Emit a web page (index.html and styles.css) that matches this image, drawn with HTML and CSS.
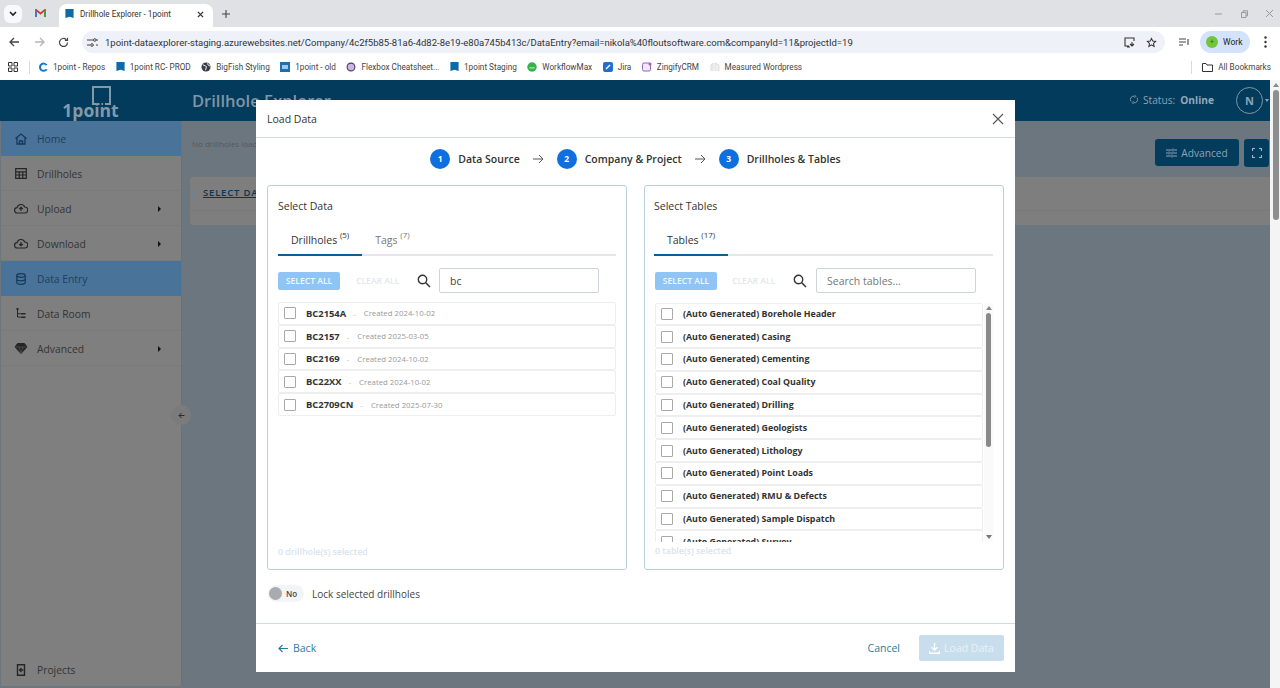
FILE: index.html
```html
<!DOCTYPE html>
<html lang="en">
<head>
<meta charset="utf-8">
<title>Drillhole Explorer - 1point</title>
<link rel="stylesheet" href="styles.css">
</head>
<body>
<div class="tabstrip">
  <div class="tabmenu"><svg width="8" height="6" viewBox="0 0 8 6"><path d="M1 1l3 3 3-3" fill="none" stroke="#222" stroke-width="1.600"/></svg></div>
  <div class="gmail"><svg width="11" height="9" viewBox="0 0 12 10"><path d="M1 9V1l5 4 5-4v8" fill="none" stroke="#d93a2f" stroke-width="2"/><path d="M1 9V2" stroke="#3b7be0" stroke-width="2"/><path d="M11 9V2" stroke="#35a853" stroke-width="2"/></svg></div>
  <div class="tab">
    <svg class="bm" width="9" height="10" viewBox="0 0 9 11"><path d="M0 0h9v10L4.500 8.500 0 10z" fill="#0b6aa8"/></svg>
    <span class="tabtitle">Drillhole Explorer - 1point</span>
    <svg class="tabx" width="7" height="7" viewBox="0 0 8 8"><path d="M1 1l6 6M7 1L1 7" stroke="#333" stroke-width="1.500"/></svg>
  </div>
  <svg class="newtab" width="8" height="8" viewBox="0 0 9 9"><path d="M4.500 0v9M0 4.500h9" stroke="#444" stroke-width="1.200"/></svg>
  <div class="winctl">
    <svg width="8" height="8" viewBox="0 0 8 8"><path d="M0 4h7" stroke="#999"/></svg>
    <svg width="8" height="8" viewBox="0 0 8 8"><path d="M1.500 2.500h4.500v5H1.500zM3 2.500V.8h4.500v5H6" fill="none" stroke="#999"/></svg>
    <svg width="9" height="9" viewBox="0 0 9 9"><path d="M1 1l7 7M8 1L1 8" stroke="#999"/></svg>
  </div>
</div>
<div class="toolbar">
  <svg class="nav-back" width="11" height="10" viewBox="0 0 11 10"><path d="M10 5H1.500M5 1L1 5l4 4" fill="none" stroke="#444" stroke-width="1.300"/></svg>
  <svg class="nav-fwd" width="11" height="10" viewBox="0 0 11 10"><path d="M1 5h8.500M6 1l4 4-4 4" fill="none" stroke="#b5b5b5" stroke-width="1.300"/></svg>
  <svg class="nav-reload" width="11" height="11" viewBox="0 0 11 11"><path d="M9.500 5.500a4 4 0 1 1-1.200-2.900M9.500 .8v2.600H6.900" fill="none" stroke="#444" stroke-width="1.200"/></svg>
  <div class="omnibox">
    <svg width="11" height="9" viewBox="0 0 11 9"><path d="M0 2h6M0 7h3M9 7h2M9 2h2" stroke="#444"/><circle cx="7.800" cy="2" r="1.300" fill="none" stroke="#444"/><circle cx="5" cy="7" r="1.300" fill="none" stroke="#444"/></svg>
    <span class="url">1point-dataexplorer-staging.azurewebsites.net/Company/4c2f5b85-81a6-4d82-8e19-e80a745b413c/DataEntry?email=nikola%40floutsoftware.com&amp;companyId=11&amp;projectId=19</span>
    <svg class="omni-a" width="12" height="11" viewBox="0 0 12 11"><path d="M5 9H1V1h9v3M3 10h3M8 5v4M6 7l2 2 2-2" fill="none" stroke="#333" stroke-width="1.100"/></svg>
    <svg class="omni-b" width="11" height="11" viewBox="0 0 24 24"><path d="M12 3l2.800 6 6.200.7-4.600 4.300 1.300 6.500L12 17.200 6.300 20.500l1.300-6.500L3 9.700 9.200 9z" fill="none" stroke="#333" stroke-width="2.200"/></svg>
  </div>
  <svg class="mediaic" width="11" height="9" viewBox="0 0 11 9"><path d="M0 1h7M0 4h7M0 7h4M9 1v6" stroke="#444" stroke-width="1.100" fill="none"/></svg>
  <div class="profile"><span class="avatar">+</span><span>Work</span></div>
  <svg class="kebab" width="3" height="12" viewBox="0 0 3 12"><circle cx="1.500" cy="1.500" r="1.200" fill="#333"/><circle cx="1.500" cy="6" r="1.200" fill="#333"/><circle cx="1.500" cy="10.500" r="1.200" fill="#333"/></svg>
</div>
<div class="bookmarks">
  <svg width="10" height="10" viewBox="0 0 10 10"><path d="M.500.500h3.500v3.500H.500zM6 .500h3.500v3.500H6zM.500 6h3.500v3.500H.500zM6 6h3.500v3.500H6z" fill="none" stroke="#333"/></svg>
  <span class="bmsep"></span>
  <span class="bk"><svg width="10" height="10" viewBox="0 0 11 11"><path d="M9.500 3.500A4 4 0 1 0 9.500 8" fill="none" stroke="#1479c9" stroke-width="2.200"/></svg>1point - Repos</span>
  <span class="bk"><svg width="9" height="10" viewBox="0 0 9 11"><path d="M0 0h9v10L4.500 8.500 0 10z" fill="#0b6aa8"/></svg>1point RC- PROD</span>
  <span class="bk"><svg width="10" height="10" viewBox="0 0 11 11"><circle cx="5.500" cy="5.500" r="5" fill="#3a3f45"/><path d="M2 3l4 2-1 4M7 1.500l1 2 2 1" stroke="#fff" fill="none"/></svg>BigFish Styling</span>
  <span class="bk"><svg width="10" height="10" viewBox="0 0 10 10"><rect width="10" height="10" fill="#1c6fb0"/><rect x="2" y="3" width="6" height="4" fill="#9cc8ea"/></svg>1point - old</span>
  <span class="bk"><svg width="10" height="10" viewBox="0 0 11 11"><circle cx="5.500" cy="5.500" r="4.300" fill="#c9b8e2" stroke="#4d3a72" stroke-width="1.200"/></svg>Flexbox Cheatsheet...</span>
  <span class="bk"><svg width="9" height="10" viewBox="0 0 9 11"><path d="M0 0h9v10L4.500 8.500 0 10z" fill="#0b6aa8"/></svg>1point Staging</span>
  <span class="bk"><svg width="10" height="10" viewBox="0 0 11 11"><circle cx="5.500" cy="5.500" r="5.200" fill="#35b34a"/><path d="M2.500 6.500h6" stroke="#d8f5dc"/></svg>WorkflowMax</span>
  <span class="bk"><svg width="10" height="10" viewBox="0 0 10 10"><rect width="10" height="10" rx="2" fill="#1f6ed4"/><path d="M3 7l4-4" stroke="#fff" stroke-width="1.500"/></svg>Jira</span>
  <span class="bk"><svg width="10" height="10" viewBox="0 0 10 10"><rect x=".5" y="1" width="8" height="8" rx="1.500" fill="#efeaf7" stroke="#8868c0"/><circle cx="8" cy="2" r="1.500" fill="#d94a8a"/></svg>ZingifyCRM</span>
  <span class="bk"><svg width="10" height="10" viewBox="0 0 10 10"><path d="M1 9V3l2-2v8M5 9V1l4 2v6" fill="#eee" stroke="#ddd"/></svg>Measured Wordpress</span>
  <span class="bkend"><span class="bmsep"></span><svg width="11" height="9" viewBox="0 0 11 9"><path d="M.5 8.500V.5h3.500l1 1.500h5.500v6.500z" fill="none" stroke="#333"/></svg>All Bookmarks</span>
</div>

<div class="app">
  <div class="page">
    <header class="appbar">
      <div class="logo">
        <svg width="19" height="19" viewBox="0 0 19 19"><path d="M4 18H1V1h17v17h-5M6 18h1.500M9.500 18H11" fill="none" stroke="#8499a8" stroke-width="2"/></svg>
        <span>1point</span>
      </div>
      <div class="apptitle">Drillhole Explorer</div>
      <div class="status">
        <svg width="8" height="11" viewBox="0 0 9 11"><path d="M1 7.500A3.600 3.600 0 0 1 5 2M8 3.500A3.600 3.600 0 0 1 4 9M5 .5L6.500 2 5 3.500M4 7.500L2.500 9 4 10.500" fill="none" stroke="#8ba3b4"/></svg>
        <span>Status:</span><b>Online</b>
      </div>
      <div class="userbtn">N</div>
      <span class="usercaret"></span>
    </header>
    <div class="main">
      <nav class="sidebar">
        <a class="nav active"><svg width="13" height="12" viewBox="0 0 13 12"><path d="M1 5.500L6.500 1 12 5.500M2.500 5v6h8V5M5 11V8h3v3" fill="none" stroke="#123a5c" stroke-width="1.300"/></svg><span>Home</span></a>
        <a class="nav"><svg width="12" height="11" viewBox="0 0 12 11"><path d="M.7.700h10.600v9.600H.7zM.7 3.800h10.600M.7 7h10.600M4.200 3.800v6.500M7.800 3.800v6.500" fill="none" stroke="#4a4a4a" stroke-width="1.200"/></svg><span>Drillholes</span></a>
        <a class="nav"><svg width="14" height="11" viewBox="0 0 14 11"><path d="M3.500 10a2.700 2.700 0 0 1-.4-5.400 4 4 0 0 1 7.600-.6 3 3 0 0 1 .2 6zM7 8V4.500M5.200 6L7 4.300 8.800 6" fill="none" stroke="#4a4a4a" stroke-width="1.200"/></svg><span>Upload</span><i class="caret"></i></a>
        <a class="nav"><svg width="14" height="11" viewBox="0 0 14 11"><path d="M3.500 10a2.700 2.700 0 0 1-.4-5.400 4 4 0 0 1 7.600-.6 3 3 0 0 1 .2 6zM7 4v3.500M5.200 6L7 7.700 8.800 6" fill="none" stroke="#4a4a4a" stroke-width="1.200"/></svg><span>Download</span><i class="caret"></i></a>
        <a class="nav active"><svg width="10" height="12" viewBox="0 0 10 12"><ellipse cx="5" cy="2.500" rx="4.200" ry="1.800" fill="none" stroke="#123a5c" stroke-width="1.200"/><path d="M.8 2.500v7c0 1 1.900 1.800 4.200 1.800s4.200-.8 4.200-1.800v-7M.8 6c0 1 1.900 1.800 4.200 1.800S9.200 7 9.200 6" fill="none" stroke="#123a5c" stroke-width="1.200"/></svg><span>Data Entry</span></a>
        <a class="nav"><svg width="11" height="11" viewBox="0 0 11 11"><path d="M1 0h2v2H1zM5 5h5v1.500H5zM5 8.500h5V10H5z" fill="#4a4a4a"/><path d="M2 2v7h2.500M2 5.700h2.500" fill="none" stroke="#4a4a4a"/></svg><span>Data Room</span></a>
        <a class="nav"><svg width="13" height="11" viewBox="0 0 13 11"><path d="M3 .5h7L12.500 4 6.500 10.500.5 4z" fill="#4a4a4a" stroke="#4a4a4a"/><path d="M1 4h11M4.500 4l2 6 2-6" fill="none" stroke="#aaa" stroke-width=".7"/></svg><span>Advanced</span><i class="caret"></i></a>
        <a class="nav projects"><svg width="9" height="12" viewBox="0 0 9 12"><path d="M1 .7h7v10.600H1z" fill="none" stroke="#4a4a4a" stroke-width="1.400"/><path d="M7 6H3M5 4L3 6l2 2" fill="none" stroke="#4a4a4a" stroke-width="1.300"/></svg><span>Projects</span></a>
        <span class="collapse">
          <svg width="7" height="7" viewBox="0 0 7 7"><path d="M6.500 3.500H1M3.500 1L1 3.500 3.500 6" fill="none" stroke="#555"/></svg>
        </span>
      </nav>
      <div class="content">
        <div class="toprow">
          <span class="noload">No drillholes loaded</span>
          <button class="advbtn"><svg width="11" height="10" viewBox="0 0 11 10"><path d="M0 2h6M8 2h3M0 5h2M4 5h7M0 8h5M7 8h4M7 .5v3M3 3.500v3M6 6.500v3" stroke="#8ca5b4"/></svg>Advanced</button>
          <button class="fullbtn"><svg width="10" height="10" viewBox="0 0 10 10"><path d="M.5 3V.5H3M7 .5h2.500V3M9.500 7v2.500H7M3 9.500H.5V7" fill="none" stroke="#9fb6c6" stroke-width="1.200"/></svg></button>
        </div>
        <div class="selcard"><a class="sellink">SELECT DATA</a></div>
      </div>
    </div>
  </div>
  <div class="pagebar"><span class="pageup"></span><i></i></div>

  <div class="overlay"></div>
  <div class="modalwrap">
    <section class="modal">
      <div class="mhead">
        <span>Load Data</span>
        <svg width="12" height="12" viewBox="0 0 12 12"><path d="M1 1l10 10M11 1L1 11" stroke="#555" stroke-width="1.100"/></svg>
      </div>
      <div class="stepper">
        <span class="num">1</span><b>Data Source</b>
        <svg width="11" height="10" viewBox="0 0 11 10"><path d="M0 5h10M6 1l4 4-4 4" fill="none" stroke="#555"/></svg>
        <span class="num">2</span><b>Company &amp; Project</b>
        <svg width="11" height="10" viewBox="0 0 11 10"><path d="M0 5h10M6 1l4 4-4 4" fill="none" stroke="#555"/></svg>
        <span class="num">3</span><b>Drillholes &amp; Tables</b>
      </div>
      <div class="panels">
        <div class="panel">
          <h3>Select Data</h3>
          <div class="tabs">
            <span class="mtab on">Drillholes <sup>(5)</sup></span>
            <span class="mtab">Tags <sup>(7)</sup></span>
          </div>
          <div class="tools">
            <span class="selall">SELECT ALL</span>
            <span class="clrall">CLEAR ALL</span>
            <svg class="sicon" width="14" height="14" viewBox="0 0 14 14"><circle cx="5.500" cy="5.500" r="4.200" fill="none" stroke="#333" stroke-width="1.400"/><path d="M8.700 8.700L13 13" stroke="#333" stroke-width="1.500"/></svg>
            <span class="sinput val">bc</span>
          </div>
          <div class="list holes">
            <div class="row"><i class="cb"></i><b>BC2154A</b><em>-</em><small>Created 2024-10-02</small></div>
            <div class="row"><i class="cb"></i><b>BC2157</b><em>-</em><small>Created 2025-03-05</small></div>
            <div class="row"><i class="cb"></i><b>BC2169</b><em>-</em><small>Created 2024-10-02</small></div>
            <div class="row"><i class="cb"></i><b>BC22XX</b><em>-</em><small>Created 2024-10-02</small></div>
            <div class="row"><i class="cb"></i><b>BC2709CN</b><em>-</em><small>Created 2025-07-30</small></div>
          </div>
          <div class="count">0 drillhole(s) selected</div>
        </div>
        <div class="panel right">
          <h3>Select Tables</h3>
          <div class="tabs">
            <span class="mtab on">Tables <sup>(17)</sup></span>
          </div>
          <div class="tools two">
            <span class="selall">SELECT ALL</span>
            <span class="clrall">CLEAR ALL</span>
            <svg class="sicon" width="14" height="14" viewBox="0 0 14 14"><circle cx="5.500" cy="5.500" r="4.200" fill="none" stroke="#333" stroke-width="1.400"/><path d="M8.700 8.700L13 13" stroke="#333" stroke-width="1.500"/></svg>
            <span class="sinput ph">Search tables...</span>
          </div>
          <div class="listwrap">
            <div class="list tables">
              <div class="row"><i class="cb"></i><b>(Auto Generated) Borehole Header</b></div>
              <div class="row"><i class="cb"></i><b>(Auto Generated) Casing</b></div>
              <div class="row"><i class="cb"></i><b>(Auto Generated) Cementing</b></div>
              <div class="row"><i class="cb"></i><b>(Auto Generated) Coal Quality</b></div>
              <div class="row"><i class="cb"></i><b>(Auto Generated) Drilling</b></div>
              <div class="row"><i class="cb"></i><b>(Auto Generated) Geologists</b></div>
              <div class="row"><i class="cb"></i><b>(Auto Generated) Lithology</b></div>
              <div class="row"><i class="cb"></i><b>(Auto Generated) Point Loads</b></div>
              <div class="row"><i class="cb"></i><b>(Auto Generated) RMU &amp; Defects</b></div>
              <div class="row"><i class="cb"></i><b>(Auto Generated) Sample Dispatch</b></div>
              <div class="row"><i class="cb"></i><b>(Auto Generated) Survey</b></div>
            </div>
            <div class="vbar"><span class="up"></span><span class="thumb"></span><span class="down"></span></div>
          </div>
          <div class="count">0 table(s) selected</div>
        </div>
      </div>
      <div class="lock">
        <span class="toggle"><i></i><b>No</b></span>
        <span>Lock selected drillholes</span>
      </div>
      <div class="mfoot">
        <a class="back"><svg width="10" height="9" viewBox="0 0 10 9"><path d="M10 4.500H1M4.500 1L1 4.500 4.500 8" fill="none" stroke="#2a7c9f" stroke-width="1.200"/></svg>Back</a>
        <a class="cancel">Cancel</a>
        <span class="load"><svg width="11" height="11" viewBox="0 0 11 11"><path d="M5.500 0v7M2.500 4.200L5.500 7l3-2.800M.5 8v2.200h10V8" fill="none" stroke="#fff" stroke-width="1.400"/></svg>Load Data</span>
      </div>
    </section>
  </div>
</div>
</body>
</html>
```
FILE: styles.css
```css
* { box-sizing: border-box; }
html, body { margin: 0; height: 688px; overflow: hidden; }
body { font-family: "Open Sans", "Noto Sans", sans-serif; display: flex; flex-direction: column; background: #fff; color: #333; }
svg { display: block; flex: none; }

.tabstrip { height: 27px; background: #dfe1e5; display: flex; align-items: center; padding-left: 4px; font-family: Roboto, sans-serif; }
.tabmenu { width: 18px; height: 18px; background: #f8f9fa; border-radius: 6px; display: flex; align-items: center; justify-content: center; }
.gmail { width: 11px; margin-left: 13px; }
.tab { width: 154px; height: 23px; margin-top: 4px; margin-left: 13px; padding: 0 0 3px 6px; background: #fff; border-radius: 8px 8px 0 0; display: flex; align-items: center; font-size: 8.200px; color: #333; }
.tabtitle { margin-left: 6px; width: 117px; white-space: nowrap; }
.newtab { margin-left: 9px; }
.winctl { margin-left: auto; display: flex; align-items: center; gap: 17px; padding-right: 6px; }

.toolbar { height: 27px; background: #fff; display: flex; align-items: center; padding: 3px 0 0 9px; font-family: Roboto, sans-serif; }
.nav-fwd { margin-left: 14px; }
.nav-reload { margin-left: 13px; }
.omnibox { width: 1083px; margin-left: 13px; height: 22px; background: #eef1f8; border-radius: 11px; display: flex; align-items: center; padding-left: 5px; }
.url { margin-left: 7px; font-size: 9.500px; color: #2f3338; white-space: nowrap; width: 1019px; }
.omni-b { margin-left: 10px; }
.mediaic { margin-left: 14px; }
.profile { margin-left: 10px; width: 50px; height: 22px; border-radius: 11px; background: #d3e3fb; display: flex; align-items: center; gap: 5px; padding-left: 6px; font-size: 8.500px; color: #222; }
.avatar { width: 12px; height: 12px; border-radius: 50%; background: #74c43c; color: #24641a; font-size: 7px; line-height: 12px; text-align: center; }
.kebab { margin-left: 14px; }

.bookmarks { height: 26px; background: #fff; display: flex; align-items: center; padding-left: 8px; gap: 10.500px; font-family: Roboto, sans-serif; font-size: 8.200px; color: #444; white-space: nowrap; }
.bmsep { width: 1px; height: 13px; background: #d9d9d9; margin-right: -2.500px; margin-left: .5px; }
.bk { display: flex; align-items: center; gap: 5px; }
.bkend { margin-left: auto; display: flex; align-items: center; gap: 5px; padding-right: 9px; }
.bkend .bmsep { margin-right: 5px; }

.app { position: relative; flex: 1; display: flex; background: #fff; min-height: 0; }
.page { flex: 1; display: flex; flex-direction: column; min-width: 0; }
.pagebar { width: 10px; background: #f4f4f4; padding-top: 3px; display: flex; flex-direction: column; align-items: center; }
.pageup { width: 0; height: 0; border-left: 3px solid transparent; border-right: 3px solid transparent; border-bottom: 4px solid #888; margin-left: 2px; }
.pagebar i { display: block; height: 130px; width: 6px; margin: 3px 0 0 2px; border-radius: 3px; background: #8e8e8e; }

.appbar { height: 41px; background: #033b5c; display: flex; align-items: center; color: #8ba3b4; position: relative; z-index: 1; }
.logo { width: 181px; display: flex; flex-direction: column; align-items: center; color: #8499a8; }
.logo svg { margin-top: 3px; margin-left: 22px; }
.logo span { font-size: 17.500px; font-weight: 700; line-height: 18px; margin-top: -4px; }
.apptitle { font-size: 16.500px; font-weight: 600; margin-left: 11px; color: #7f96a6; }
.status { margin-left: auto; margin-bottom: 2px; display: flex; align-items: center; gap: 5px; font-size: 10.200px; }
.status b { font-weight: 700; color: #93a9b9; }
.userbtn { width: 27px; height: 27px; margin-left: 22px; border: 1px solid #7e98aa; border-radius: 50%; display: flex; align-items: center; justify-content: center; font-size: 11px; font-weight: 700; }
.usercaret { width: 0; height: 0; border-left: 2.500px solid transparent; border-right: 2.500px solid transparent; border-top: 3px solid #8ba3b4; margin: 0 1px 0 2px; }

.main { flex: 1; display: flex; min-height: 0; background: #d8ecff; }
.sidebar { width: 182px; margin-bottom: 2px; background: #fff; display: flex; flex-direction: column; position: relative; border-right: 1px solid #d0e4f8; border-left: 1px solid #d8ecff; }
.nav { height: 35px; display: flex; align-items: center; padding-left: 13px; font-size: 10.300px; color: #6a6a6a; box-shadow: inset 0 -1px 0 #f4f4f4; }
.nav svg { width: 14px; margin-right: 9px; }
.nav span { flex: 1; }
.nav.active { background: #4a7399; color: #1d3f5f; box-shadow: none; position: relative; z-index: 1; }
.caret { width: 0; height: 0; border-top: 3px solid transparent; border-bottom: 3px solid transparent; border-left: 3px solid #222; margin-right: 20px; }
.projects { margin-top: auto; padding-top: 3px; box-shadow: none; }
.collapse { position: absolute; right: -10px; top: 284px; width: 20px; height: 20px; border-radius: 50%; background: #f6f7f9; display: flex; align-items: center; justify-content: center; }

.content { flex: 1; padding-left: 8px; display: flex; flex-direction: column; }
.toprow { display: flex; align-items: center; height: 56px; padding: 7px 1px 0 2px; }
.noload { font-size: 8px; color: #a8b4bf; margin-bottom: 19px; }
.advbtn { margin-left: auto; width: 84px; height: 27px; background: #033c5d; border: 0; border-radius: 3px; color: #8ca5b4; font: 10.200px "Open Sans", sans-serif; display: flex; align-items: center; justify-content: center; gap: 4px; position: relative; z-index: 1; }
.fullbtn { margin-left: 5px; width: 25px; height: 28px; background: #033c5d; border: 0; border-radius: 3px; display: flex; align-items: center; justify-content: center; position: relative; z-index: 1; }
.selcard { height: 48px; background: #fdfdfd; border-radius: 3px 0 0 3px; }
.sellink { display: block; height: 34px; padding: 9px 0 0 13px; border-bottom: 1px solid #f2f2f2; font-size: 9.500px; line-height: 14px; font-weight: 600; color: #0f6fa8; letter-spacing: .8px; text-decoration: underline; white-space: nowrap; }

.overlay { position: absolute; inset: 0 10px 0 0; background: rgba(0, 0, 0, .5); }
.modalwrap { position: absolute; inset: 0 9px 0 0; display: flex; justify-content: center; padding-top: 20px; z-index: 2; }
.modal { width: 759px; height: 572px; background: #fff; display: flex; flex-direction: column; }

.mhead { height: 38px; border-bottom: 1px solid #cfdbe4; display: flex; align-items: center; justify-content: space-between; padding: 0 11px; font-size: 10.500px; font-weight: 500; color: #333; }
.stepper { height: 47px; padding-bottom: 6px; display: flex; align-items: center; justify-content: center; font-size: 10.500px; color: #333; }
.stepper b { font-weight: 600; margin-left: 8px; }
.stepper svg { margin: 0 13px; }
.num { width: 20px; height: 20px; border-radius: 50%; background: #0d6fe0; color: #fff; font-size: 8.500px; font-weight: 700; display: flex; align-items: center; justify-content: center; }

.panels { display: flex; gap: 17px; padding: 0 11px; }
.panel { width: 360px; height: 385px; border: 1px solid #b9cfdf; border-radius: 3px; padding: 13px 10px 0; display: flex; flex-direction: column; }
.panel h3 { margin: 0; font-size: 10.500px; font-weight: 500; line-height: 14px; color: #333; }
.panel.right h3, .panel.right .tabs { margin-left: -1px; }
.tabs { margin-top: 14px; height: 29px; border-bottom: 2px solid #e4e6e9; display: flex; }
.mtab { height: 29px; display: flex; align-items: flex-start; padding: 6px 13px 0; font-size: 10.500px; color: #777; white-space: pre; }
.mtab sup { font-size: 8px; line-height: 10px; margin-top: -3px; }
.mtab.on { color: #333; border-bottom: 2px solid #0a5f97; }

.tools { margin-top: 12px; height: 25px; display: flex; align-items: center; }
.selall { width: 62px; height: 18px; background: #90c4f5; color: #f0f7fd; border-radius: 2px; font-size: 8.600px; font-weight: 600; display: flex; align-items: center; justify-content: center; white-space: nowrap; }
.clrall { margin-left: 16px; font-size: 8.600px; font-weight: 600; color: #e4e8ec; width: 44px; white-space: nowrap; }
.sicon { margin-left: 17px; }
.sinput { margin-left: 8px; width: 160px; height: 25px; border: 1px solid #ced4da; border-radius: 2px; padding-left: 10px; display: flex; align-items: center; font-size: 10.500px; }
.sinput.val { color: #444; }
.sinput.ph { color: #777; margin-left: 9px; }
.tools.two .clrall { margin-left: 15px; }
.tools.two .sicon { margin-left: 17px; }

.list { margin-top: 9px; width: 338px; flex: 1; min-height: 0; }
.row { height: 22.800px; border: 1px solid #eceef0; border-radius: 2px; display: flex; align-items: center; padding-left: 5px; flex: none; }
.cb { width: 12px; height: 12px; border: 1px solid #a9a9a9; border-radius: 1px; background: #fff; flex: none; margin-right: 10px; }
.row b { font-size: 8.850px; font-weight: 700; color: #333; white-space: nowrap; }
.holes .row b { font-size: 9.400px; }
.row em { font-style: normal; font-size: 8px; color: #bbb; margin: 0 8px 0 7px; }
.row small { font-size: 7.800px; color: #999; white-space: nowrap; }

.listwrap { margin-top: 9.500px; display: flex; height: 239.500px; }
.list.tables { margin-top: 0; width: 328px; height: 239.500px; flex: none; overflow: hidden; }
.vbar { margin-left: 1px; width: 9px; display: flex; flex-direction: column; align-items: center; background: #fafafa; }
.up { margin-top: 3px; width: 0; height: 0; border-left: 3px solid transparent; border-right: 3px solid transparent; border-bottom: 4px solid #888; }
.thumb { margin-top: 3px; width: 5px; height: 134px; border-radius: 3px; background: #8a8a8a; }
.down { margin-top: auto; margin-bottom: 3px; width: 0; height: 0; border-left: 3px solid transparent; border-right: 3px solid transparent; border-top: 4px solid #777; }

.count { height: 26px; font-size: 8.800px; line-height: 12px; font-weight: 600; color: #d8e4ee; padding-top: 3px; flex: none; white-space: nowrap; }
.lock { height: 54px; padding: 0 0 6px 12px; border-bottom: 1px solid #cfdbe4; display: flex; align-items: center; gap: 8px; font-size: 10px; color: #444; }
.toggle { width: 36px; height: 17px; border-radius: 9px; background: #f3f4f6; display: flex; align-items: center; padding-left: 1px; gap: 4px; }
.toggle i { width: 13px; height: 13px; border-radius: 50%; background: #a9abb0; }
.toggle b { font-size: 8px; font-weight: 600; color: #444; }

.mfoot { flex: 1; display: flex; align-items: center; padding: 0 11px 0 22px; font-size: 10.500px; color: #2a7c9f; }
.back { display: flex; align-items: center; gap: 5px; }
.cancel { margin-left: auto; margin-right: 19px; }
.load { width: 85px; height: 26px; background: #c8deec; color: #e9f2f8; border-radius: 2px; display: flex; align-items: center; justify-content: center; gap: 4px; }
```
